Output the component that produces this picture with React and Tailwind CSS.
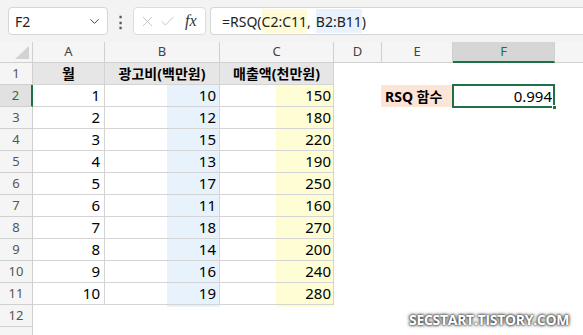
import React from 'react';
import { ChevronDown, X, Check } from 'lucide-react';

const rows = [
  [1, 10, 150],
  [2, 12, 180],
  [3, 15, 220],
  [4, 13, 190],
  [5, 17, 250],
  [6, 11, 160],
  [7, 18, 270],
  [8, 14, 200],
  [9, 16, 240],
  [10, 19, 280],
];

const cellFont = { fontFamily: '"Noto Sans", "Noto Sans CJK KR", sans-serif' };

const RowHead = ({ n, active }) => (
  <div
    className={`flex w-[33px] shrink-0 items-center justify-center border-b text-[13px] ${
      active
        ? 'border-r-2 border-b-[#d0d0d0] border-r-[#1e7145] bg-[#e1e1e1] text-[#1e7145]'
        : 'border-r border-[#d0d0d0] bg-[#f5f5f5] text-[#555]'
    }`}
  >
    {n}
  </div>
);

const ColHead = ({ label, w, active }) => (
  <div
    className={`flex ${w} shrink-0 items-center justify-center text-[13px] ${
      active
        ? 'border-b-2 border-r border-b-[#1e7145] border-r-[#d0d0d0] bg-[#d6d6d6] text-[#1e7145]'
        : 'border-b border-r border-[#d0d0d0] bg-[#f5f5f5] text-[#444]'
    }`}
  >
    {label}
  </div>
);

export default function App() {
  return (
    <div className="relative h-[335px] w-[583px] overflow-hidden bg-white" style={cellFont}>
      {/* formula bar */}
      <div className="flex h-[42px] items-start gap-[4px] bg-[#f3f3f3] pl-[8px] pt-[7px]">
        <div className="flex h-[28px] w-[100px] items-center justify-between rounded-[4px] border border-[#d6d6d6] bg-white pl-[6px] pr-[5px] text-[14px] text-[#222]">
          <span>F2</span>
          <ChevronDown size={15} strokeWidth={1.6} className="text-[#444]" />
        </div>
        <div className="flex h-[28px] w-[17px] items-center justify-center text-[15px] font-bold text-[#555]">⋮</div>
        <div className="flex h-[28px] w-[73px] items-center gap-[3px] rounded-[4px] border border-[#dcdcdc] bg-white pl-[5px]">
          <X size={17} strokeWidth={1.3} className="text-[#c4c4c4]" />
          <Check size={17} strokeWidth={1.3} className="text-[#c4c4c4]" />
          <span className="ml-[6px] text-[16px] italic text-[#333]" style={{ fontFamily: '"Liberation Serif", serif' }}>
            fx
          </span>
        </div>
        <div className="flex h-[28px] flex-1 items-center rounded-l-[4px] border border-r-0 border-[#d6d6d6] bg-white pl-[11px] text-[14px] text-[#222]">
          <span>=RSQ(</span>
          <span className="flex h-[24px] items-center bg-[#fffbd6]">C2:C11</span>
          <span className="pr-[5px]">,</span>
          <span className="flex h-[24px] items-center bg-[#e8f2fc]">B2:B11</span>
          <span>)</span>
        </div>
      </div>

      {/* column headers */}
      <div className="flex h-[21px]">
        <div className="flex w-[33px] shrink-0 items-end justify-end border-b border-r border-[#d0d0d0] bg-[#f5f5f5] pb-[3px] pr-[3px]">
          <svg width="14" height="13" viewBox="0 0 14 13">
            <polygon points="14,0 14,13 0,13" fill="#d2d2d2" />
          </svg>
        </div>
        <ColHead label="A" w="w-[72px]" />
        <ColHead label="B" w="w-[115px]" />
        <ColHead label="C" w="w-[114px]" />
        <ColHead label="D" w="w-[48px]" />
        <ColHead label="E" w="w-[71px]" />
        <ColHead label="F" w="w-[102px]" active />
        <div className="flex-1 border-b border-[#d0d0d0] bg-[#f5f5f5]" />
      </div>

      {/* row 1 */}
      <div className="flex h-[22px]">
        <RowHead n={1} />
        <div className="flex w-[72px] items-center justify-center border-b border-r border-[#d4d4d4] bg-[#e6e6e6] text-[14px] font-bold text-black">월</div>
        <div className="flex w-[115px] items-center justify-center border-b border-r border-[#d4d4d4] bg-[#e6e6e6] text-[14px] font-bold text-black">광고비(백만원)</div>
        <div className="flex w-[114px] items-center justify-center border-b border-r border-[#d4d4d4] bg-[#e6e6e6] text-[14px] font-bold text-black">매출액(천만원)</div>
      </div>

      {rows.map(([m, ad, sales], i) => (
        <div key={m} className="flex h-[22px]">
          <RowHead n={i + 2} active={i === 0} />
          <div className="flex w-[72px] items-center justify-end border-b border-r border-[#d4d4d4] pr-[4px] text-[15px] text-black">{m}</div>
          <div className="flex w-[115px] items-center justify-end border-b border-r border-[#d4d4d4] bg-[linear-gradient(to_right,transparent_62px,#e7f2fc_62px)] pr-[3px] text-[15px] text-black">{ad}</div>
          <div className="flex w-[114px] items-center justify-end border-b border-r border-[#d4d4d4] bg-[linear-gradient(to_right,transparent_56px,#fefdd3_56px)] pr-[2px] text-[15px] text-black">{sales}</div>
          {i === 0 && (
            <>
              <div className="w-[47px]" />
              <div className="flex w-[72px] items-center bg-[#fce4d6] pl-[4px] text-[14px] font-bold text-black">RSQ 함수</div>
              <div className="relative flex w-[102px] items-center justify-end pr-[3px] text-[15px] text-black">
                0.994
                <div className="absolute -left-px -top-px bottom-[-1px] right-0 border-2 border-[#1e7145]" />
                <div className="absolute bottom-[-3px] right-[-2px] h-[5px] w-[5px] border border-white bg-[#1e7145]" />
              </div>
            </>
          )}
        </div>
      ))}

      {/* row 12 */}
      <div className="flex h-[22px]">
        <RowHead n={12} />
        <div className="ml-[72px] h-[2px] w-[115px] bg-[linear-gradient(to_right,transparent_62px,#e7f2fc_62px)]" />
        <div className="h-[2px] w-[114px] bg-[linear-gradient(to_right,transparent_56px,#fefdd3_56px)]" />
      </div>
      <div className="flex h-[10px]">
        <div className="w-[33px] border-r border-[#d0d0d0] bg-[#f5f5f5]" />
      </div>

      <div
        className="absolute left-[409px] top-[309px] text-[14px] font-bold tracking-[-0.3px] text-white [text-shadow:0_0_2px_#333,0_0_3px_#444,0_0_4px_#666]"
        style={{ fontFamily: '"Open Sans", sans-serif' }}
      >
        SECSTART.TISTORY.COM
      </div>
    </div>
  );
}
